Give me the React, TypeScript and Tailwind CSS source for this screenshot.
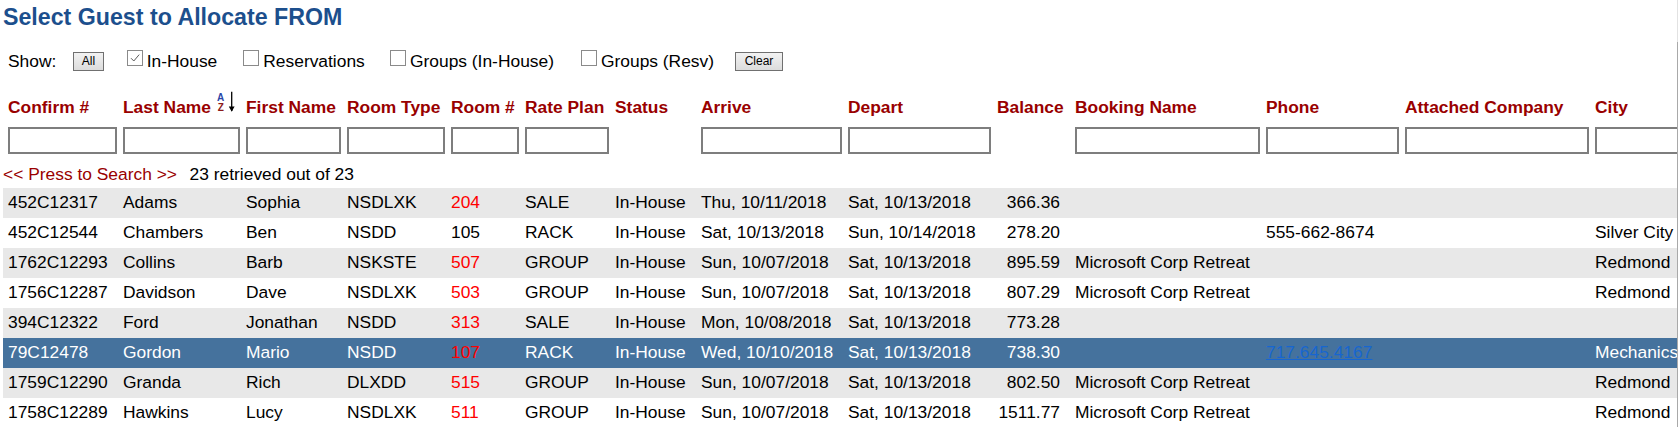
import React from 'react';

type Guest = {
    confirm: string;
    last: string;
    first: string;
    roomType: string;
    room: string;
    roomRed: boolean;
    rate: string;
    status: string;
    arrive: string;
    depart: string;
    balance: string;
    booking: string;
    phone: string;
    company: string;
    city: string;
};

const guests: Guest[] = [
    { confirm: '452C12317', last: 'Adams', first: 'Sophia', roomType: 'NSDLXK', room: '204', roomRed: true, rate: 'SALE', status: 'In-House', arrive: 'Thu, 10/11/2018', depart: 'Sat, 10/13/2018', balance: '366.36', booking: '', phone: '', company: '', city: '' },
    { confirm: '452C12544', last: 'Chambers', first: 'Ben', roomType: 'NSDD', room: '105', roomRed: false, rate: 'RACK', status: 'In-House', arrive: 'Sat, 10/13/2018', depart: 'Sun, 10/14/2018', balance: '278.20', booking: '', phone: '555-662-8674', company: '', city: 'Silver City' },
    { confirm: '1762C12293', last: 'Collins', first: 'Barb', roomType: 'NSKSTE', room: '507', roomRed: true, rate: 'GROUP', status: 'In-House', arrive: 'Sun, 10/07/2018', depart: 'Sat, 10/13/2018', balance: '895.59', booking: 'Microsoft Corp Retreat', phone: '', company: '', city: 'Redmond' },
    { confirm: '1756C12287', last: 'Davidson', first: 'Dave', roomType: 'NSDLXK', room: '503', roomRed: true, rate: 'GROUP', status: 'In-House', arrive: 'Sun, 10/07/2018', depart: 'Sat, 10/13/2018', balance: '807.29', booking: 'Microsoft Corp Retreat', phone: '', company: '', city: 'Redmond' },
    { confirm: '394C12322', last: 'Ford', first: 'Jonathan', roomType: 'NSDD', room: '313', roomRed: true, rate: 'SALE', status: 'In-House', arrive: 'Mon, 10/08/2018', depart: 'Sat, 10/13/2018', balance: '773.28', booking: '', phone: '', company: '', city: '' },
    { confirm: '79C12478', last: 'Gordon', first: 'Mario', roomType: 'NSDD', room: '107', roomRed: true, rate: 'RACK', status: 'In-House', arrive: 'Wed, 10/10/2018', depart: 'Sat, 10/13/2018', balance: '738.30', booking: '', phone: '717.645.4167', company: '', city: 'Mechanicsburg' },
    { confirm: '1759C12290', last: 'Granda', first: 'Rich', roomType: 'DLXDD', room: '515', roomRed: true, rate: 'GROUP', status: 'In-House', arrive: 'Sun, 10/07/2018', depart: 'Sat, 10/13/2018', balance: '802.50', booking: 'Microsoft Corp Retreat', phone: '', company: '', city: 'Redmond' },
    { confirm: '1758C12289', last: 'Hawkins', first: 'Lucy', roomType: 'NSDLXK', room: '511', roomRed: true, rate: 'GROUP', status: 'In-House', arrive: 'Sun, 10/07/2018', depart: 'Sat, 10/13/2018', balance: '1511.77', booking: 'Microsoft Corp Retreat', phone: '', company: '', city: 'Redmond' },
];

const SELECTED = 5;

// column widths taken from the original table layout
const gridCols = 'grid grid-cols-[115px_123px_101px_104px_74px_90px_86px_147px_149px_78px_191px_139px_190px_200px]';

const Checkbox: React.FC<{ checked?: boolean }> = ({ checked }) => (
    <span className="w-[16px] h-[16px] border border-[#8a8a8a] bg-white flex items-center justify-center shrink-0">
        {checked && (
            <svg width="12" height="12" viewBox="0 0 12 12">
                <path d="M2 6.2 L4.8 9 L10.2 2.6" fill="none" stroke="#5a5a5a" strokeWidth="1" />
            </svg>
        )}
    </span>
);

const SmallButton: React.FC<{ label: string; width: string }> = ({ label, width }) => (
    <button
        type="button"
        className={`${width} h-[19px] mt-[2px] border border-[#707070] bg-gradient-to-b from-[#f2f2f2] to-[#dcdcdc] text-[12px] leading-[17px] text-black shrink-0`}
    >
        {label}
    </button>
);

const SortIcon = () => (
    <svg width="20" height="22" viewBox="0 0 20 22" className="ml-[5px] -mt-[6px] shrink-0">
        <text x="4.7" y="9.8" textAnchor="middle" fontSize="10" fontWeight="bold" fill="#2a46a8" fontFamily="'Liberation Sans', Arial, sans-serif">A</text>
        <text x="4.8" y="20.4" textAnchor="middle" fontSize="10" fontWeight="bold" fill="#8b1a1a" fontFamily="'Liberation Sans', Arial, sans-serif">Z</text>
        <path d="M15.7 0.8 V20" stroke="#000" strokeWidth="1.3" />
        <path d="M12.8 15.6 L15.7 20.8 L18.6 15.6 Z" fill="#000" />
    </svg>
);

const headers = ['Confirm #', 'Last Name', 'First Name', 'Room Type', 'Room #', 'Rate Plan', 'Status', 'Arrive', 'Depart', 'Balance', 'Booking Name', 'Phone', 'Attached Company', 'City'];
const filterCols = [true, true, true, true, true, true, false, true, true, false, true, true, true, true];

export default function App() {
    return (
        <div className="w-[1678px] h-[427px] overflow-hidden bg-white text-black font-['Liberation_Sans',Arial,sans-serif] text-[17.4px] leading-[20px]">
            <div className="h-[42px] border-r border-[#e2e2e2] pt-[4px] pl-[3px]">
                <h1 className="text-[23.2px] leading-[27px] font-bold text-[#1c4f8d]">Select Guest to Allocate FROM</h1>
            </div>

            <div className="h-[385px] border-r border-[#a9a9a9] overflow-hidden pl-[3px]">
                {/* show filters */}
                <div className="flex items-start mt-[8px] h-[22px] pl-[5px]">
                    <span className="w-[65px] shrink-0 mt-[0.5px]">Show:</span>
                    <SmallButton label="All" width="w-[31px]" />
                    <label className="flex items-start gap-[4px] w-[116.6px] ml-[22.7px] shrink-0">
                        <Checkbox checked />
                        <span className="mt-[0.5px]">In-House</span>
                    </label>
                    <label className="flex items-start gap-[4px] w-[146.7px] shrink-0">
                        <Checkbox />
                        <span className="mt-[0.5px]">Reservations</span>
                    </label>
                    <label className="flex items-start gap-[4px] w-[191px] shrink-0">
                        <Checkbox />
                        <span className="mt-[0.5px]">Groups (In-House)</span>
                    </label>
                    <label className="flex items-start gap-[4px] w-[154px] shrink-0">
                        <Checkbox />
                        <span className="mt-[0.5px]">Groups (Resv)</span>
                    </label>
                    <SmallButton label="Clear" width="w-[48px]" />
                </div>

                {/* column headers */}
                <div className={`${gridCols} mt-[25px] h-[20px] font-bold text-[#990000] whitespace-nowrap`}>
                    {headers.map((h, i) => (
                        <div key={h} className="pl-[5px] flex items-start">
                            {h}
                            {i === 1 && <SortIcon />}
                        </div>
                    ))}
                </div>

                {/* filter inputs */}
                <div className={`${gridCols} mt-[10px] h-[27px]`}>
                    {filterCols.map((show, i) => (
                        <div key={i} className="pl-[5px] pr-[1px]">
                            {show && <input type="text" className="w-full h-[27px] border-2 border-[#7e7e7e] bg-white outline-none" />}
                        </div>
                    ))}
                </div>

                <div className="mt-[10px] h-[20px] flex whitespace-nowrap">
                    <span className="text-[#990000]">&lt;&lt; Press to Search &gt;&gt;</span>
                    <span className="ml-[12.6px]">23 retrieved out of 23</span>
                </div>

                {/* guest rows */}
                <div className="mt-[4px]">
                    {guests.map((g, idx) => {
                        const selected = idx === SELECTED;
                        const rowBg = selected ? 'bg-[#45729d] text-white' : idx % 2 === 0 ? 'bg-[#e8e8e8]' : 'bg-white';
                        return (
                            <div key={g.confirm} className={`${gridCols} h-[30px] leading-[28px] whitespace-nowrap ${rowBg}`}>
                                <div className="pl-[5px]">{g.confirm}</div>
                                <div className="pl-[5px]">{g.last}</div>
                                <div className="pl-[5px]">{g.first}</div>
                                <div className="pl-[5px]">{g.roomType}</div>
                                <div className={`pl-[5px] ${g.roomRed ? 'text-[#ff0000]' : ''}`}>{g.room}</div>
                                <div className="pl-[5px]">{g.rate}</div>
                                <div className="pl-[5px]">{g.status}</div>
                                <div className="pl-[5px]">{g.arrive}</div>
                                <div className="pl-[5px]">{g.depart}</div>
                                <div className="pr-[10px] text-right">{g.balance}</div>
                                <div className="pl-[5px]">{g.booking}</div>
                                <div className="pl-[5px]">
                                    {selected && g.phone ? (
                                        <a href="#" className="text-[#1766d0] underline">{g.phone}</a>
                                    ) : (
                                        g.phone
                                    )}
                                </div>
                                <div className="pl-[5px]">{g.company}</div>
                                <div className="pl-[5px]">{g.city}</div>
                            </div>
                        );
                    })}
                </div>
            </div>
        </div>
    );
}
